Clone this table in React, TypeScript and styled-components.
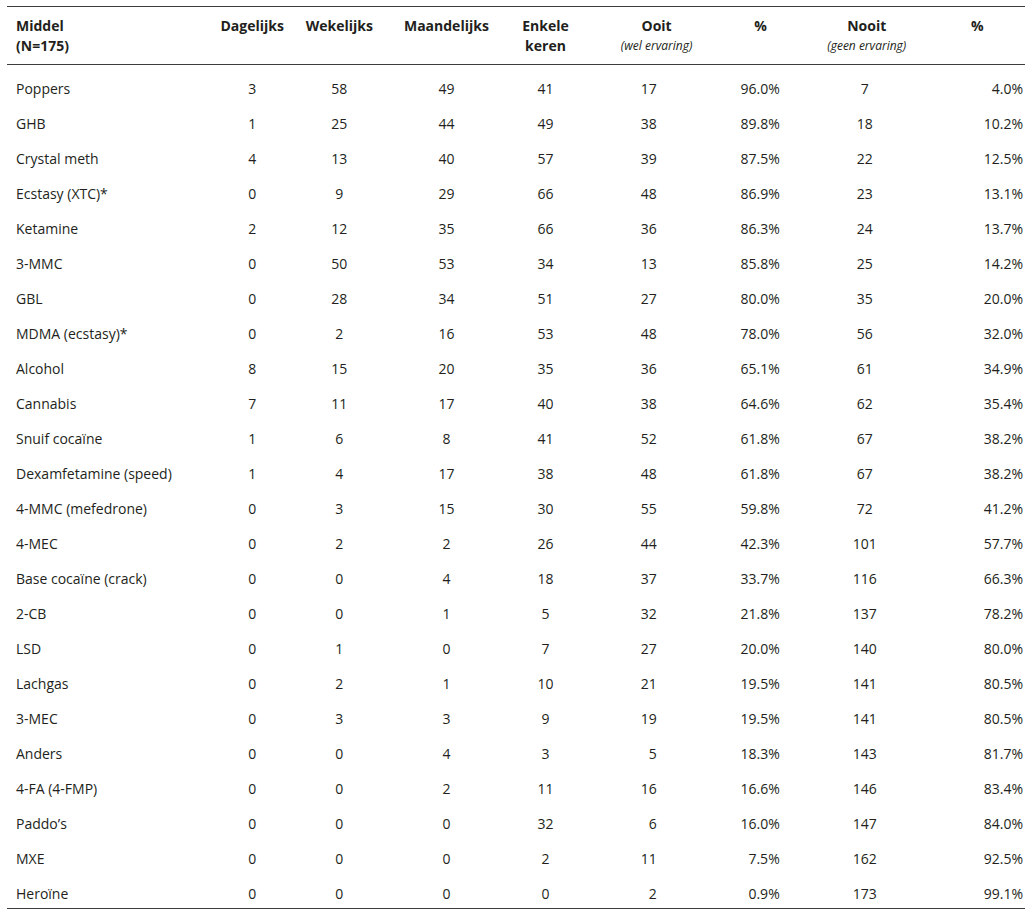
import React from "react";
import styled, { createGlobalStyle } from "styled-components";

const Global = createGlobalStyle`
  html, body { margin: 0; padding: 0; background: #ffffff; }
  body { font-family: "Open Sans", "Noto Sans", "Liberation Sans", sans-serif; color: #231f20; }
`;

type Align = "left" | "center" | "right";
type Col = { w: number; body: Align; pl?: number; pr?: number; hpl?: number };

const cols: Col[] = [
  { w: 202, body: "left", pl: 9, hpl: 9 },
  { w: 86, body: "center" },
  { w: 88, body: "center" },
  { w: 126, body: "center" },
  { w: 72, body: "center" },
  { w: 150, body: "right", pr: 75 },
  { w: 58, body: "right", pr: 10 },
  { w: 140, body: "center", pl: 10, hpl: 14 },
  { w: 95, body: "right", pr: 2 },
];

const rows: string[][] = [
  ["Poppers", "3", "58", "49", "41", "17", "96.0%", "7", "4.0%"],
  ["GHB", "1", "25", "44", "49", "38", "89.8%", "18", "10.2%"],
  ["Crystal meth", "4", "13", "40", "57", "39", "87.5%", "22", "12.5%"],
  ["Ecstasy (XTC)*", "0", "9", "29", "66", "48", "86.9%", "23", "13.1%"],
  ["Ketamine", "2", "12", "35", "66", "36", "86.3%", "24", "13.7%"],
  ["3-MMC", "0", "50", "53", "34", "13", "85.8%", "25", "14.2%"],
  ["GBL", "0", "28", "34", "51", "27", "80.0%", "35", "20.0%"],
  ["MDMA (ecstasy)*", "0", "2", "16", "53", "48", "78.0%", "56", "32.0%"],
  ["Alcohol", "8", "15", "20", "35", "36", "65.1%", "61", "34.9%"],
  ["Cannabis", "7", "11", "17", "40", "38", "64.6%", "62", "35.4%"],
  ["Snuif cocaïne", "1", "6", "8", "41", "52", "61.8%", "67", "38.2%"],
  ["Dexamfetamine (speed)", "1", "4", "17", "38", "48", "61.8%", "67", "38.2%"],
  ["4-MMC (mefedrone)", "0", "3", "15", "30", "55", "59.8%", "72", "41.2%"],
  ["4-MEC", "0", "2", "2", "26", "44", "42.3%", "101", "57.7%"],
  ["Base cocaïne (crack)", "0", "0", "4", "18", "37", "33.7%", "116", "66.3%"],
  ["2-CB", "0", "0", "1", "5", "32", "21.8%", "137", "78.2%"],
  ["LSD", "0", "1", "0", "7", "27", "20.0%", "140", "80.0%"],
  ["Lachgas", "0", "2", "1", "10", "21", "19.5%", "141", "80.5%"],
  ["3-MEC", "0", "3", "3", "9", "19", "19.5%", "141", "80.5%"],
  ["Anders", "0", "0", "4", "3", "5", "18.3%", "143", "81.7%"],
  ["4-FA (4-FMP)", "0", "0", "2", "11", "16", "16.6%", "146", "83.4%"],
  ["Paddo\u2019s", "0", "0", "0", "32", "6", "16.0%", "147", "84.0%"],
  ["MXE", "0", "0", "0", "2", "11", "7.5%", "162", "92.5%"],
  ["Heroïne", "0", "0", "0", "0", "2", "0.9%", "173", "99.1%"],
];

const Page = styled.div`
  padding: 6px 11px 0 7px;
`;

const Table = styled.table`
  width: 1018px;
  border-collapse: collapse;
  table-layout: fixed;
  font-size: 14px;
`;

const Head = styled.thead`
  border-top: 1px solid #3c3c3c;
  border-bottom: 1px solid #3c3c3c;
`;

const Body = styled.tbody`
  border-bottom: 1px solid #3c3c3c;
`;

const HeadCell = styled.th<{ $first?: boolean; $pl?: number }>`
  vertical-align: top;
  text-align: ${(p) => (p.$first ? "left" : "center")};
  padding: 9px 0 8px ${(p) => p.$pl ?? 0}px;
  font-weight: 700;
  line-height: 20px;
  color: #231f20;
`;

const Sub = styled.span`
  display: block;
  font-style: italic;
  font-weight: 400;
  font-size: 12px;
  line-height: 20px;
`;

const Row = styled.tr`
  height: 35px;
`;

const Cell = styled.td<{ $align: Align; $pl?: number; $pr?: number; $firstRow?: boolean }>`
  text-align: ${(p) => p.$align};
  padding: ${(p) => (p.$firstRow ? 14 : 11)}px ${(p) => p.$pr ?? 0}px 4px ${(p) => p.$pl ?? 0}px;
  line-height: 20px;
  white-space: nowrap;
  font-weight: 400;
`;

const headers: React.ReactNode[] = [
  <>Middel<br />(N=175)</>,
  "Dagelijks",
  "Wekelijks",
  "Maandelijks",
  <>Enkele<br />keren</>,
  <>Ooit<Sub>(wel ervaring)</Sub></>,
  "%",
  <>Nooit<Sub>(geen ervaring)</Sub></>,
  "%",
];

export default function App() {
  return (
    <Page>
      <Global />
      <Table>
        <colgroup>
          {cols.map((c, i) => (
            <col key={i} style={{ width: c.w }} />
          ))}
        </colgroup>
        <Head>
          <tr>
            {headers.map((h, i) => (
              <HeadCell key={i} $first={i === 0} $pl={cols[i].hpl}>
                {h}
              </HeadCell>
            ))}
          </tr>
        </Head>
        <Body>
          {rows.map((r, ri) => (
            <Row key={ri}>
              {r.map((v, ci) => (
                <Cell
                  key={ci}
                  $align={cols[ci].body}
                  $pl={cols[ci].pl}
                  $pr={cols[ci].pr}
                  $firstRow={ri === 0}
                >
                  {v}
                </Cell>
              ))}
            </Row>
          ))}
        </Body>
      </Table>
    </Page>
  );
}
